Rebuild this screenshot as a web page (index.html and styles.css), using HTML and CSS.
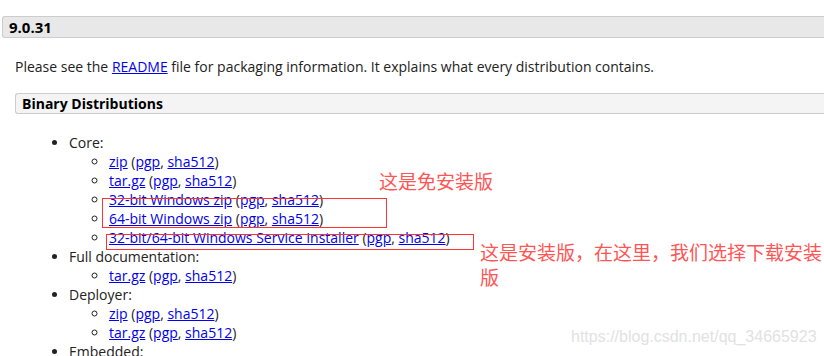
FILE: index.html
```html
<!DOCTYPE html>
<html lang="en">
<head>
    <meta charset="UTF-8">
    <title>Tomcat 9 Downloads</title>
    <link rel="stylesheet" href="styles.css">
</head>
<body>
    <div class="page">
        <h3 class="version">9.0.31</h3>
        <div class="content">
            <p class="intro">Please see the <a href="#">README</a> file for packaging information. It explains what every distribution contains.</p>
            <h4 class="section">Binary Distributions</h4>
            <ul class="dist">
                <li>Core:
                    <ul>
                        <li><a href="#">zip</a> (<a href="#">pgp</a>, <a href="#">sha512</a>)</li>
                        <li><a href="#">tar.gz</a> (<a href="#">pgp</a>, <a href="#">sha512</a>)</li>
                        <li><a href="#">32-bit Windows zip</a> (<a href="#">pgp</a>, <a href="#">sha512</a>)</li>
                        <li><a href="#">64-bit Windows zip</a> (<a href="#">pgp</a>, <a href="#">sha512</a>)</li>
                        <li><a href="#">32-bit/64-bit Windows Service Installer</a> (<a href="#">pgp</a>, <a href="#">sha512</a>)</li>
                    </ul>
                </li>
                <li>Full documentation:
                    <ul>
                        <li><a href="#">tar.gz</a> (<a href="#">pgp</a>, <a href="#">sha512</a>)</li>
                    </ul>
                </li>
                <li>Deployer:
                    <ul>
                        <li><a href="#">zip</a> (<a href="#">pgp</a>, <a href="#">sha512</a>)</li>
                        <li><a href="#">tar.gz</a> (<a href="#">pgp</a>, <a href="#">sha512</a>)</li>
                    </ul>
                </li>
                <li>Embedded:</li>
            </ul>
        </div>

        <!-- screenshot annotations -->
        <div class="mark mark-zip"></div>
        <div class="mark mark-installer"></div>
        <div class="note note-zip">这是免安装版</div>
        <div class="note note-installer">这是安装版，在这里，我们选择下载安装版</div>
        <div class="watermark">https://blog.csdn.net/qq_34665923</div>
    </div>
</body>
</html>
```

FILE: styles.css
```css
body {
    margin: 0;
    background: #fff;
    font-family: "Open Sans", "Liberation Sans", sans-serif;
    font-size: 14px;
    color: #222;
    overflow: hidden;
}
.page {
    position: relative;
    height: 340px;
    padding-top: 16px;
}
a {
    color: #0000ee;
}
.version {
    margin: 0 0 0 2px;
    height: 20px;
    line-height: 20px;
    padding-left: 6px;
    font-size: 15px;
    font-weight: bold;
    color: #000;
    background: #e8e8e8;
    border: 1px solid #ccc;
    border-right: none;
    border-radius: 3px 0 0 3px;
}
.content {
    padding-left: 15px;
}
.intro {
    margin: 19px 0 0 0;
    line-height: 19px;
}
.section {
    margin: 17px 0 0 0;
    height: 19px;
    line-height: 19px;
    padding-left: 6px;
    font-size: 14px;
    font-weight: bold;
    color: #000;
    background: #f4f4f4;
    border: 1px solid #ccc;
    border-right: none;
    border-radius: 3px 0 0 3px;
}
.dist {
    margin: 19px 0 0 0;
    padding-left: 54px;
    line-height: 19px;
}
.dist ul {
    margin: 0;
    padding-left: 40px;
    list-style: circle;
}
.mark {
    position: absolute;
    border: 1.5px solid #f33;
}
.mark-zip {
    left: 102px;
    top: 198px;
    width: 283px;
    height: 28px;
}
.mark-installer {
    left: 106px;
    top: 234px;
    width: 366px;
    height: 14px;
}
.note {
    position: absolute;
    color: #f55;
    font-family: "Noto Sans CJK SC", sans-serif;
    font-size: 19px;
    line-height: 25px;
}
.note-zip {
    left: 379px;
    top: 168px;
}
.note-installer {
    left: 480px;
    top: 239px;
    width: 344px;
}
.watermark {
    position: absolute;
    left: 571px;
    top: 328px;
    font-family: "Liberation Sans", sans-serif;
    font-size: 16px;
    color: #e2e2e2;
}
```
